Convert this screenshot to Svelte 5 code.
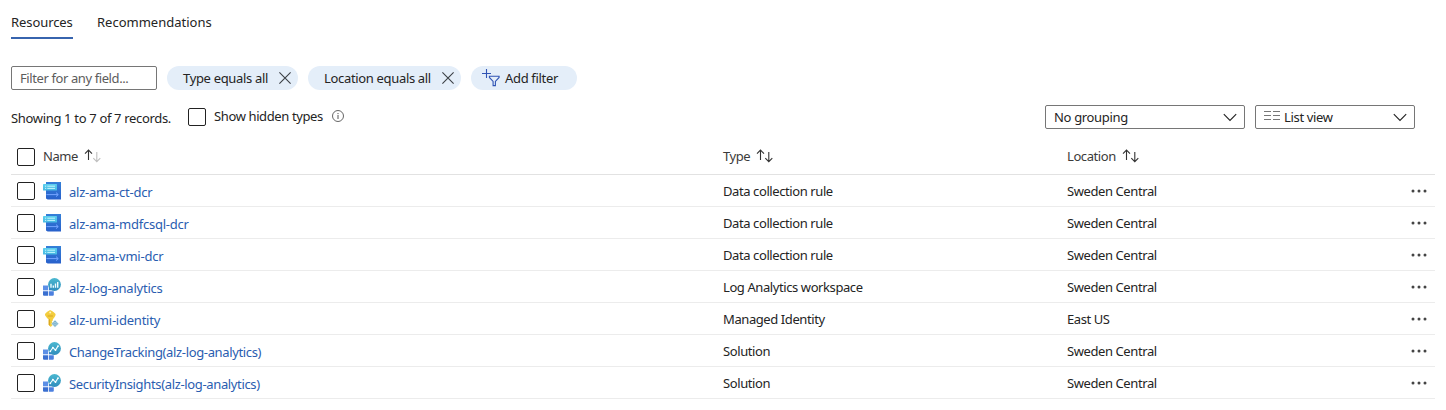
<script>
  const rows = [
    { name: 'alz-ama-ct-dcr', icon: 'dcr', type: 'Data collection rule', location: 'Sweden Central' },
    { name: 'alz-ama-mdfcsql-dcr', icon: 'dcr', type: 'Data collection rule', location: 'Sweden Central' },
    { name: 'alz-ama-vmi-dcr', icon: 'dcr', type: 'Data collection rule', location: 'Sweden Central' },
    { name: 'alz-log-analytics', icon: 'workspace', type: 'Log Analytics workspace', location: 'Sweden Central' },
    { name: 'alz-umi-identity', icon: 'identity', type: 'Managed Identity', location: 'East US' },
    { name: 'ChangeTracking(alz-log-analytics)', icon: 'solution', type: 'Solution', location: 'Sweden Central' },
    { name: 'SecurityInsights(alz-log-analytics)', icon: 'solution', type: 'Solution', location: 'Sweden Central' }
  ];
</script>

{#snippet closeIcon()}
  <svg class="close" width="12" height="12" viewBox="0 0 12 12"><path d="M.4.4l11.2 11.2M11.6.4L.4 11.6" fill="none" stroke="#3b3f45" stroke-width="1.1" /></svg>
{/snippet}

{#snippet chevron()}
  <svg class="chevron" width="14" height="9" viewBox="0 0 14 9"><path d="M.8 1.2L7 7.4l6.200-6.200" fill="none" stroke="#222" stroke-width="1.1" /></svg>
{/snippet}

{#snippet sortIcon(single)}
  <svg class="sort" width="18" height="14" viewBox="0 0 18 14" fill="none" stroke-width="1.1">
    <path d="M4.500 11V1.200M1 4.700l3.500-3.600L8 4.700" stroke="#333" />
    <path d="M12.800 3v9.600M9.300 9.200l3.500 3.500 3.500-3.500" stroke={single ? '#c0c0c0' : '#333'} />
  </svg>
{/snippet}

{#snippet resourceIcon(kind)}
  <svg class="res-icon" width="18" height="18" viewBox="0 0 18 18">
    {#if kind === 'dcr'}
      <path d="M3 0h15v17.600H4.600L3 16.600z" fill="url(#dcr-blue)" />
      <path d="M3.400 12.600h11.600M13 10.600l2.300 2-2.300 2" fill="none" stroke="#74a4ff" stroke-width="1" />
      <rect x="0" y="2" width="14" height="6.500" rx=".6" fill="url(#dcr-cyan)" />
      <path d="M2 4.200h1.200M4.300 4.200H12M2 6.400h1.200M4.300 6.400H12" stroke="#c4f6fd" stroke-width="1" />
    {:else if kind === 'identity'}
      <path d="M7.200.3c1 0 4.700 2.500 5.300 3.800.5 1.400-1.500 4.400-2.700 5.300v1.200l-1.100 1 1.100 1.100-1 1 1 1-2.100 2.200-2-2.100V9.500C4.400 8.400 1.800 5.700 2 4.500 2.200 3 6 .3 7.200.3z" fill="#f3cd3e" />
      <path d="M5.700 9.500v5.300l1.200 1.300V9z" fill="#d9a51c" />
      <circle cx="7.200" cy="2.600" r="1" fill="#fff3bd" />
      <path d="M4.600 6h5.300" stroke="#d8a524" stroke-width="1" />
      <path d="M12 9.800l3.900 3.900-3.900 3.900-3.900-3.900z" fill="#c4e4ee" />
      <path d="M12 11v5.200M9.500 13.800h5M12 11l2.500 2.800L12 16.300l-2.500-2.500z" fill="none" stroke="#6ba3c4" stroke-width=".7" />
    {:else}
      <path d="M0 7.500h5.200v4.800H0z" fill="#5c8fe6" />
      <path d="M0 13.200h5.200v4.600H1a1 1 0 0 1-1-1z" fill="#3a6fd0" />
      <path d="M6 13.200h4.800v3.600a1 1 0 0 1-1 1H6z" fill="#4c80df" />
      <path d="M6 7.500h4.800v4.800H6z" fill="#347eca" />
      <circle cx="11.500" cy="6.500" r="6.400" fill="url(#globe)" />
      {#if kind === 'workspace'}
        <path d="M8 5.700v4.100M10.300 7.400v2.400M12.500 5.600v4.200M14.700 3.900v5.900" stroke="#effcff" stroke-width="1.400" />
      {:else}
        <path d="M7.300 9.300l2.600-3.700 2.600 2.500 2.500-4" fill="none" stroke="#effcff" stroke-width="1.100" />
        <g fill="#fff"><circle cx="7.300" cy="9.300" r=".9" /><circle cx="9.900" cy="5.600" r=".9" /><circle cx="12.500" cy="8.100" r=".9" /><circle cx="15" cy="4.100" r=".9" /></g>
      {/if}
    {/if}
  </svg>
{/snippet}

<svg class="defs" width="0" height="0">
  <defs>
    <linearGradient id="dcr-blue" x1="0" y1="0" x2="0" y2="1"><stop offset="0" stop-color="#3480d8" /><stop offset="1" stop-color="#2860cb" /></linearGradient>
    <linearGradient id="dcr-cyan" x1="0" y1="0" x2="0" y2="1"><stop offset="0" stop-color="#5cd0ee" /><stop offset="1" stop-color="#48b8e2" /></linearGradient>
    <linearGradient id="globe" x1="0" y1="0" x2="0" y2="1"><stop offset="0" stop-color="#4bb8d0" /><stop offset="1" stop-color="#2f8dbd" /></linearGradient>
  </defs>
</svg>

<main>
  <nav>
    <span class="tab active">Resources</span>
    <span class="tab rec">Recommendations</span>
  </nav>

  <div class="filters">
    <div class="search"><span>Filter for any field...</span></div>
    <div class="pill type"><span>Type equals all</span>{@render closeIcon()}</div>
    <div class="pill loc"><span>Location equals all</span>{@render closeIcon()}</div>
    <div class="pill add">
      <svg width="18" height="18" viewBox="0 0 18 18" fill="none" stroke="#3054b4" stroke-width="1.100"><path d="M4.500 0v9M0 4.500h9M7.400 7.300h9.700v1.200l-3.700 3.900v4.200h-2.300v-4.200L7.400 8.500z" /></svg>
      <span>Add filter</span>
    </div>
  </div>

  <div class="bar">
    <span class="count">Showing 1 to 7 of 7 records.</span>
    <i class="box"></i>
    <span class="hidden-types">Show hidden types</span>
    <svg class="info" width="12" height="12" viewBox="0 0 12 12"><circle cx="6" cy="6" r="5.500" fill="none" stroke="#555" stroke-width=".9" /><path d="M6 5v4M6 3v1.100" stroke="#555" stroke-width="1" /></svg>
    <div class="select grouping"><span>No grouping</span>{@render chevron()}</div>
    <div class="select view">
      <svg class="list" width="16" height="10" viewBox="0 0 16 10"><path d="M0 .5h7M9 .5h7M0 4.500h7M9 4.500h7M0 8.500h7M9 8.500h7" stroke="#777" stroke-width="1" /></svg>
      <span>List view</span>{@render chevron()}
    </div>
  </div>

  <div class="table">
    <div class="row head">
      <i class="box"></i>
      <div class="cell first"><span class="h-name">Name</span>{@render sortIcon(true)}</div>
      <div class="cell"><span>Type</span>{@render sortIcon(false)}</div>
      <div class="cell"><span>Location</span>{@render sortIcon(false)}</div>
    </div>
    {#each rows as row}
      <div class="row">
        <i class="box"></i>
        <div class="cell first">{@render resourceIcon(row.icon)}<span class="link" class:long={row.icon === 'solution'}>{row.name}</span></div>
        <div class="cell"><span>{row.type}</span></div>
        <div class="cell"><span>{row.location}</span></div>
        <svg class="more" width="16" height="4" viewBox="0 0 16 4" fill="#444"><circle cx="2" cy="2" r="1.500" /><circle cx="8" cy="2" r="1.500" /><circle cx="14" cy="2" r="1.500" /></svg>
      </div>
    {/each}
  </div>
</main>

<style>
  :global(body) { margin: 0; background: #fff; }
  main {
    box-sizing: border-box;
    height: 410px;
    padding: 12px 11px 0;
    overflow: hidden;
    font: 13px/20px "Noto Sans", "Open Sans", sans-serif;
    letter-spacing: -0.33px;
    color: #242424;
    white-space: nowrap;
  }
  .defs { display: block; }
  svg { flex: none; display: block; }
  nav { display: flex; gap: 24px; height: 27px; letter-spacing: 0; }
  .tab { box-sizing: border-box; height: 27px; }
  .active { width: 62px; border-bottom: 2px solid #3764ae; letter-spacing: -0.08px; }
  .filters { display: flex; margin-top: 27px; height: 24px; }
  .search {
    box-sizing: border-box;
    width: 146px;
    margin-right: 10px;
    padding: 1px 8px;
    border: 1px solid #767676;
    border-radius: 2px;
    color: #5c5c5c;
    letter-spacing: -0.4px;
  }
  .pill {
    box-sizing: border-box;
    display: flex;
    align-items: center;
    justify-content: space-between;
    height: 24px;
    margin-right: 10px;
    padding: 0 7px 0 16px;
    border-radius: 12px;
    background: #e4eef9;
  }
  .pill.type { width: 131px; }
  .pill.loc { width: 153px; }
  .pill.add { width: 106px; padding: 0 0 0 11px; justify-content: flex-start; gap: 5px; }
  .bar { display: flex; height: 24px; margin-top: 15px; }
  .count { width: 177px; padding-top: 3px; }
  .box {
    box-sizing: border-box;
    flex: none;
    width: 18px;
    height: 18px;
    border: 1px solid #222;
    border-radius: 2px;
  }
  .bar .box { margin-top: 3px; }
  .hidden-types { width: 109px; margin: 1px 9px 0 8px; letter-spacing: -0.38px; }
  .info { margin-top: 5px; }
  .select {
    box-sizing: border-box;
    display: flex;
    align-items: center;
    height: 24px;
    padding: 0 7px 0 8px;
    border: 1px solid #767676;
    border-radius: 2px;
  }
  .grouping { width: 200px; margin-left: auto; margin-right: 10px; }
  .view { width: 160px; margin-right: 20px; gap: 4px; }
  .list { margin-bottom: 2px; }
  .chevron { margin-left: auto; }
  .table { margin-top: 10px; }
  .row {
    box-sizing: border-box;
    display: grid;
    grid-template-columns: 18px 688px 344px 344px 16px;
    align-items: center;
    height: 32px;
    padding-left: 6px;
    border-bottom: 1px solid #ececec;
    width: 1424px;
    letter-spacing: -0.41px;
  }
  .row.head { height: 36px; border-color: #e2e2e2; color: #3b3b3b; }
  .head .cell { margin-top: -1px; }
  .h-name { letter-spacing: -0.45px; }
  .row:not(.head) .box { margin-top: 1px; }
  .cell { display: flex; align-items: center; }
  .first { padding-left: 8px; }
  .sort { margin-left: 6px; }
  .res-icon { margin: 0 8px 0 0; }
  .link { color: #2a5db0; padding-top: 2px; letter-spacing: -0.23px; }
  .link.long { letter-spacing: -0.35px; }
</style>
